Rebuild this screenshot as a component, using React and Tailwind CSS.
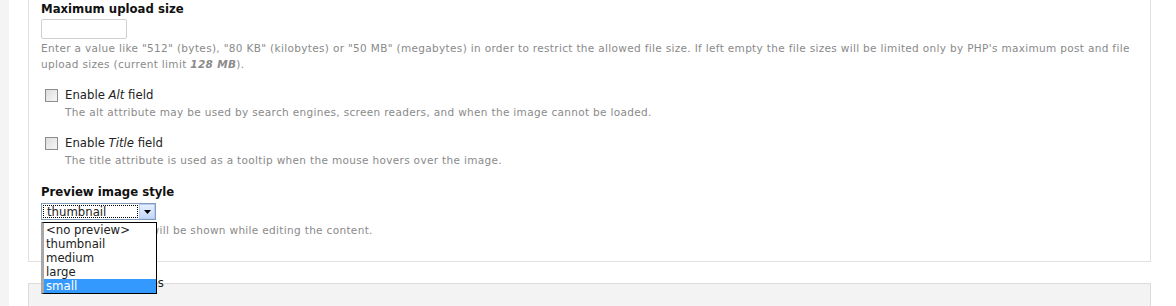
import React from 'react';

const descClass = "text-[10.5px] leading-[16px] text-[#8a8a8a] font-['DejaVu_Sans',sans-serif] tracking-[0.33px]";
const labelFont = "font-['DejaVu_Sans_Condensed','DejaVu_Sans',sans-serif]";

const Checkbox = () => (
  <span className="inline-block w-[13px] h-[13px] border border-[#8c8c8c] bg-gradient-to-br from-[#dcdcdc] to-[#f8f8f8] shrink-0" />
);

const CheckRow = ({ name, desc }) => (
  <div>
    <label className={`flex items-center gap-[7px] pl-[4px] text-[13px] leading-[16px] text-[#222] ${labelFont}`}>
      <Checkbox />
      <span>
        Enable <em>{name}</em> field
      </span>
    </label>
    <div className={`${descClass} pl-[24px] mt-[1px]`}>{desc}</div>
  </div>
);

const options = ['<no preview>', 'thumbnail', 'medium', 'large', 'small'];

const PreviewSelect = () => (
  <div className="relative z-10 w-[115px]">
    <div className="flex h-[17px] border border-[#7f9db9] bg-white">
      <div className={`flex-1 m-[1px] border border-dotted border-black flex items-center pl-[3px] text-[13px] leading-none text-[#222] ${labelFont}`}>
        thumbnail
      </div>
      <div className="w-[16px] border border-[#b5cdf5] bg-gradient-to-b from-[#e6effd] to-[#c3d7f8] flex items-center justify-center">
        <svg width="7" height="4" viewBox="0 0 7 4">
          <path d="M0 0h7L3.5 4z" fill="#000" />
        </svg>
      </div>
    </div>
    <ul className={`absolute left-0 top-[19px] w-[116px] border border-black border-l-[3px] border-l-[#a8a8a8] bg-white text-[13px] text-[#222] ${labelFont}`}>
      {options.map((o) => (
        <li
          key={o}
          className={`h-[14px] leading-[14px] pl-[2px] ${o === 'small' ? 'bg-[#3399ff] text-white' : ''}`}
        >
          {o}
        </li>
      ))}
    </ul>
  </div>
);

export default function App() {
  return (
    <div className="flex w-full h-[306px] bg-white overflow-hidden">
      <div className="w-[9px] bg-[#f4f4f4] shrink-0" />
      <div className="flex-1 flex flex-col pl-[19px] pr-[25px]">
        <div className="border-l border-r border-b border-[#e2e2e2] pl-[12px] pr-[10px] h-[262px] shrink-0">
          <div className={`text-[13px] leading-[17px] font-bold text-[#111] ${labelFont}`}>
            Maximum upload size
          </div>
          <input
            type="text"
            className="block mt-[2px] w-[86px] h-[20px] border border-[#d0d0d0] rounded-[2px] bg-white"
          />
          <div className={`${descClass} mt-[1px]`}>
            Enter a value like "512" (bytes), "80 KB" (kilobytes) or "50 MB" (megabytes) in order to restrict the allowed file size. If left empty the file sizes will be limited only by PHP's maximum post and file upload sizes (current limit <em className="font-bold">128 MB</em>).
          </div>
          <div className="mt-[15px]">
            <CheckRow name="Alt" desc="The alt attribute may be used by search engines, screen readers, and when the image cannot be loaded." />
          </div>
          <div className="mt-[15px]">
            <CheckRow name="Title" desc="The title attribute is used as a tooltip when the mouse hovers over the image." />
          </div>
          <div className={`mt-[15px] text-[13px] leading-[17px] font-bold text-[#111] ${labelFont}`}>
            Preview image style
          </div>
          <div className="mt-[3px]">
            <PreviewSelect />
          </div>
          <div className={`${descClass} mt-[2px]`}>
            The preview image will be shown while editing the content.
          </div>
        </div>
        <fieldset className="mt-[14px] flex-1 border-t border-l border-r border-[#dcdcdc] bg-[#f3f3f3] min-w-0 px-[12px]">
          <legend className={`ml-[19px] text-[13px] leading-[14px] text-[#222] ${labelFont}`}>
            Number of values
          </legend>
        </fieldset>
      </div>
    </div>
  );
}
